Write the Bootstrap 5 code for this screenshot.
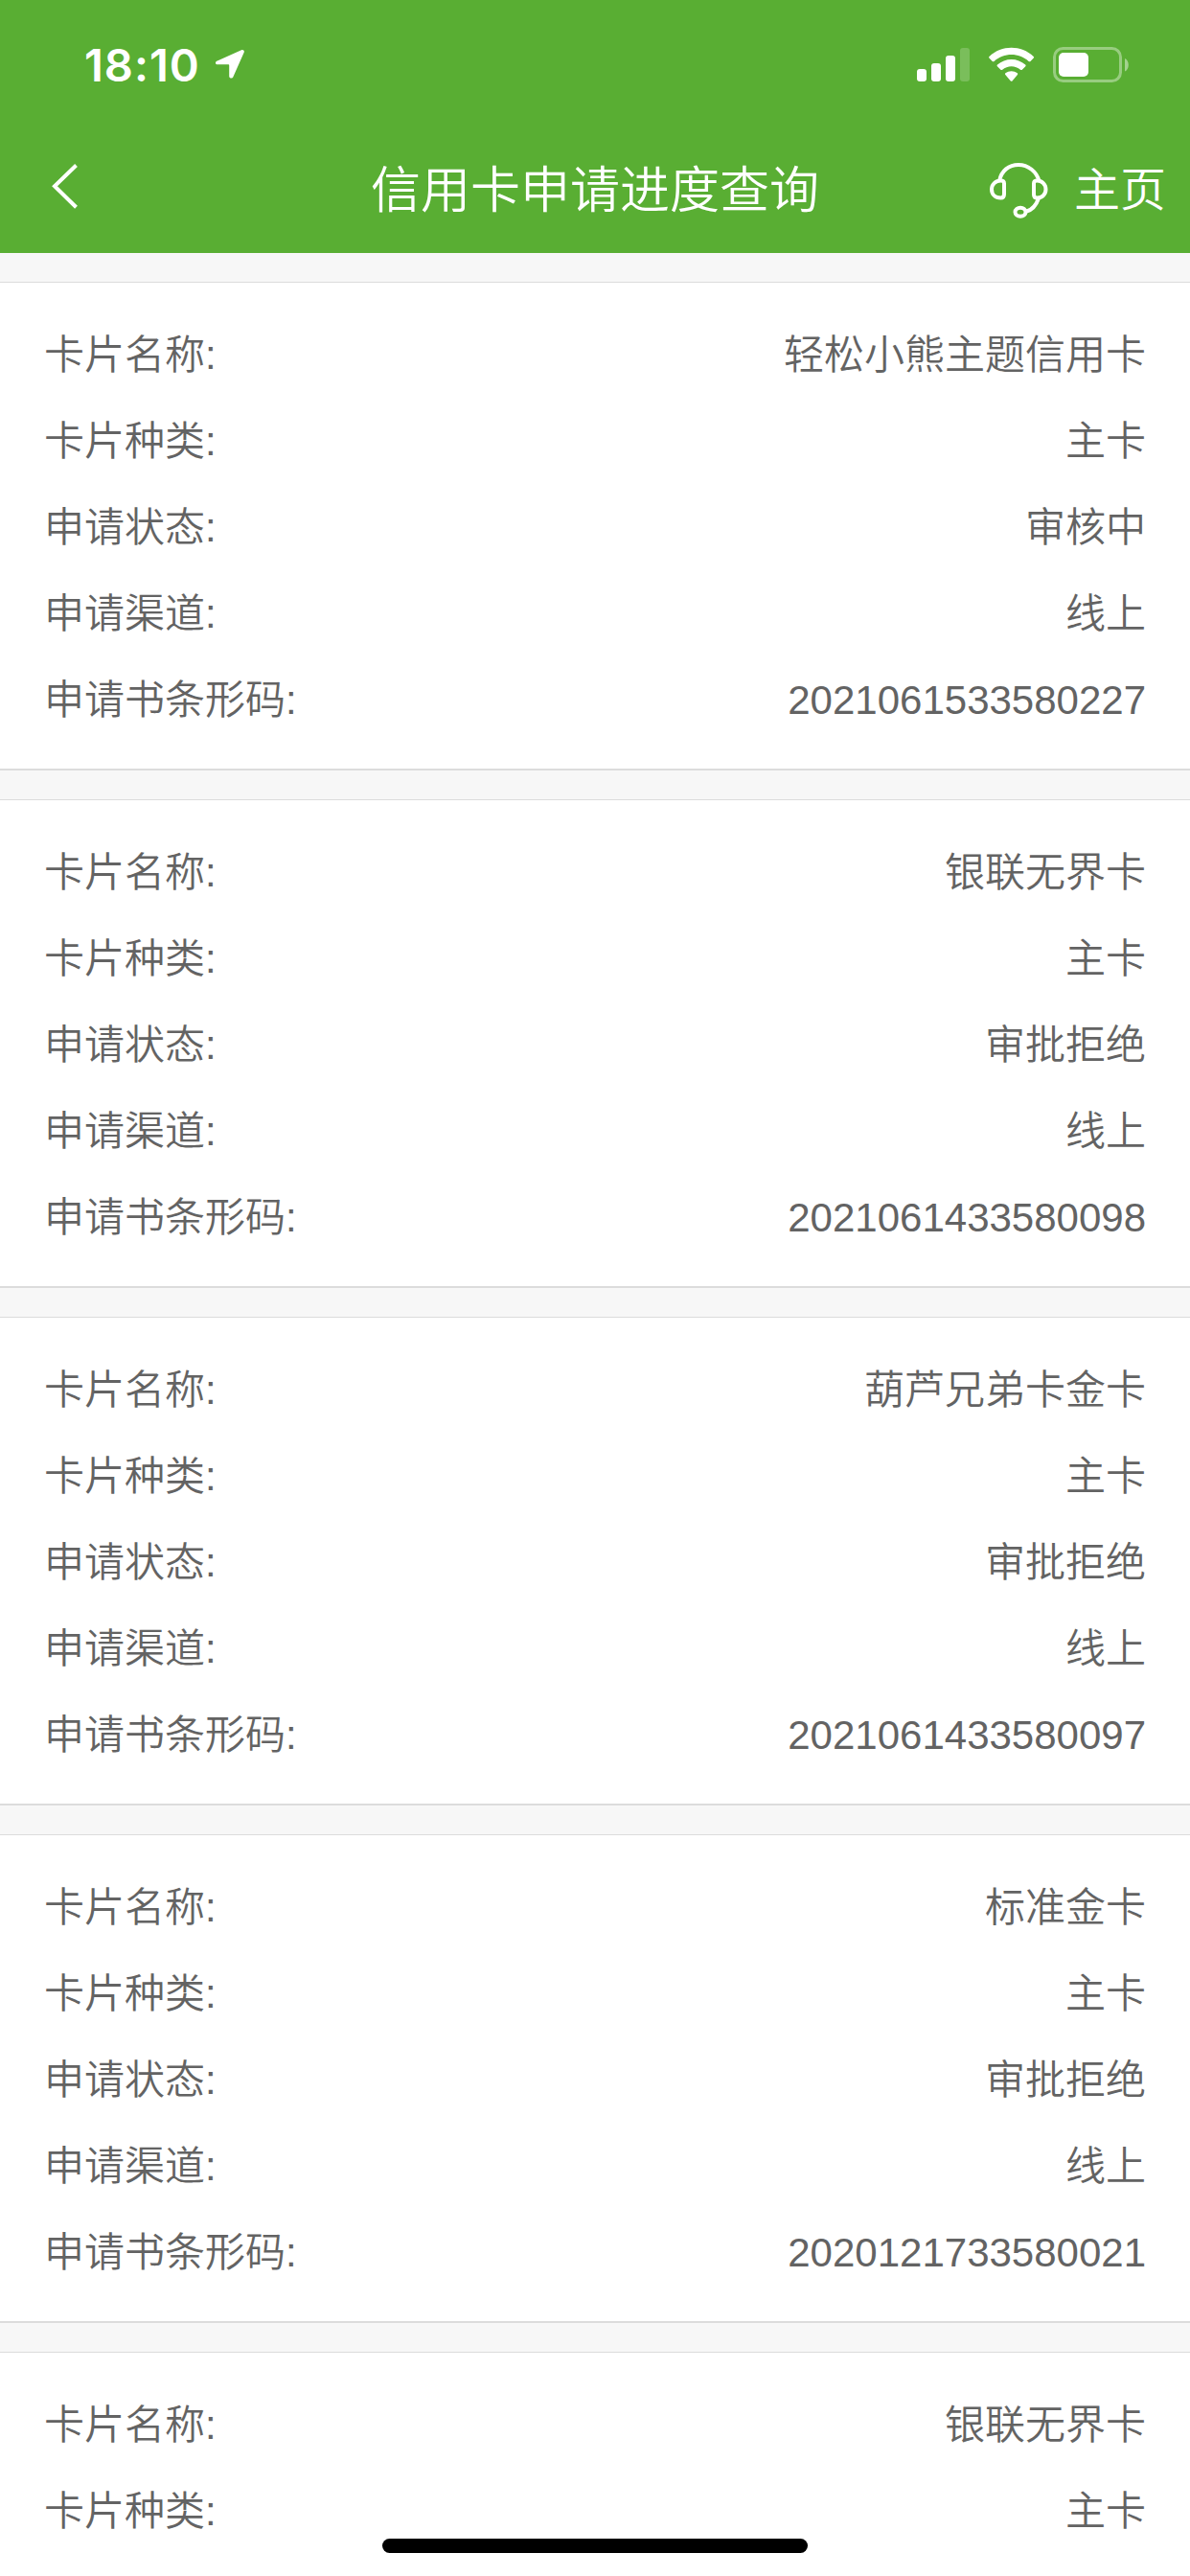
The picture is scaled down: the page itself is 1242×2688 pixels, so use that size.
<!DOCTYPE html>
<html lang="zh-CN">
<head>
<meta charset="utf-8">
<meta name="viewport" content="width=device-width, initial-scale=1">
<title>信用卡申请进度查询</title>
<link href="https://cdn.jsdelivr.net/npm/bootstrap@5.3.0/dist/css/bootstrap.min.css" rel="stylesheet">
<style>
  body { font-family: "Liberation Sans", "Noto Sans CJK SC", sans-serif; background: #f7f7f7; height: 2688px; }
  .app-top { background: #59ae33; }
  .status-bar { height: 132px; padding: 4px 62px 0 88px; }
  .clock { font: 600 47px/1 Inter, sans-serif; letter-spacing: 1px; }
  .clock-group { padding-bottom: 2px; }
  .title-bar { height: 132px; display: grid; grid-template-columns: 1fr auto 1fr; padding: 2px 25px 0; }
  .title-bar h1 { font-size: 52px; font-weight: 350; line-height: 60px; }
  .back { margin: 0 0 8px 27px; }
  .actions { gap: 26px; }
  .home-link { font-size: 48px; font-weight: 350; line-height: 60px; }
  .record { height: 510px; margin-top: 30px; padding: 31px 46px 0; border-top: 1px solid #dcdcdc; border-bottom: 2px solid #dcdcdc; color: #636363; font-size: 42px; line-height: 90px; }
  .record:last-child { height: 234px; border-bottom: 0; }
  .record dt, .record dd { font-weight: 350; margin: 0; height: 90px; }
  .home-indicator { width: 444px; height: 15px; bottom: 24px; }
  svg { display: block; flex: none; }
</style>
</head>
<body class="overflow-hidden position-relative">
<header class="app-top text-white">
  <div class="status-bar d-flex justify-content-between align-items-center">
    <div class="clock-group d-flex align-items-center gap-3">
      <span class="clock">18:10</span>
      <svg width="32" height="34" viewBox="1 0 34 34" fill="#fff"><path d="M3 13.200 29.600 1.200c2-.8 3.700.7 2.900 2.800L20.500 31c-1.100 2.500-4.400 1.700-4.400-.8V18.500c0-.9-.4-1.200-1.200-1.200H3.200c-2.700 0-3.200-3-.2-4.100Z"/></svg>
    </div>
    <svg width="223" height="38" viewBox="957 49 223 38" fill="#fff">
      <rect x="957" y="72" width="10" height="13" rx="3"/>
      <rect x="972" y="66" width="10" height="19" rx="3"/>
      <rect x="987" y="58" width="10" height="27" rx="3"/>
      <rect x="1002" y="50" width="10" height="35" rx="3" opacity=".2"/>
      <path d="M1032.500 58.900c12.800-12.200 33.400-12.200 46.200 0 .6.600.6 1.100.1 1.600l-3.300 3.400c-.6.600-1.200.6-1.900 0-10-9.200-26-9.200-36 0-.7.600-1.300.6-1.900 0l-3.300-3.400c-.5-.5-.5-1 .1-1.600Z"/>
      <path d="M1041 67.600c8.200-7.500 21-7.500 29.200 0 .6.600.6 1.100.1 1.600l-3.500 3.500c-.6.600-1.200.5-1.800 0-5.300-4.700-13.500-4.700-18.800 0-.6.500-1.200.6-1.800 0l-3.500-3.500c-.5-.5-.5-1 .1-1.600Z"/>
      <path d="M1049.400 76.300c3.600-2.800 8.800-2.800 12.400 0 .6.500.6 1 .1 1.600l-5.400 6.500c-.5.600-1.200.6-1.700 0l-5.500-6.500c-.5-.6-.5-1.100.1-1.600Z"/>
      <rect x="1100.500" y="50.500" width="69" height="34" rx="9" fill="none" stroke="#fff" stroke-width="3" opacity=".38"/>
      <rect x="1105" y="55" width="31" height="25" rx="5"/>
      <path d="M1174 61c5 2 5 11.500 0 13.500Z" opacity=".45"/>
    </svg>
  </div>
  <nav class="title-bar align-items-center">
    <svg class="back" width="30" height="50" viewBox="0 0 30 50" fill="none" stroke="#fff" stroke-width="4"><path d="M27.500 2.500 5 24.300l22.500 21.900"/></svg>
    <h1 class="m-0">信用卡申请进度查询</h1>
    <div class="actions d-flex align-items-center justify-content-end">
      <svg width="64" height="62" viewBox="1031 168 64 62" fill="none" stroke="#fff" stroke-width="4">
        <path d="M1043 189c2-11 10-17 20-17s19 7 21.500 17M1084 207c-2.500 7-7 12-12.500 13.500"/>
        <path d="M1048 191.500v11c0 2.500-1 4-3.500 4-6 0-9.500-4-9.500-9s4-9 9.500-9c2.500 0 3.500.5 3.500 3ZM1079 191.500v11.500c0 2.300 1 3.500 3.500 3.500 5.500 0 9-4 9-9s-4-9-9-9c-2.500 0-3.500.8-3.500 3Z"/>
        <ellipse cx="1065" cy="221.300" rx="5.500" ry="4.500"/>
      </svg>
      <span class="home-link">主页</span>
    </div>
  </nav>
</header>
<main>
  <dl class="record bg-white mb-0">
    <div class="d-flex justify-content-between"><dt>卡片名称:</dt><dd>轻松小熊主题信用卡</dd></div>
    <div class="d-flex justify-content-between"><dt>卡片种类:</dt><dd>主卡</dd></div>
    <div class="d-flex justify-content-between"><dt>申请状态:</dt><dd>审核中</dd></div>
    <div class="d-flex justify-content-between"><dt>申请渠道:</dt><dd>线上</dd></div>
    <div class="d-flex justify-content-between"><dt>申请书条形码:</dt><dd>2021061533580227</dd></div>
  </dl>
  <dl class="record bg-white mb-0">
    <div class="d-flex justify-content-between"><dt>卡片名称:</dt><dd>银联无界卡</dd></div>
    <div class="d-flex justify-content-between"><dt>卡片种类:</dt><dd>主卡</dd></div>
    <div class="d-flex justify-content-between"><dt>申请状态:</dt><dd>审批拒绝</dd></div>
    <div class="d-flex justify-content-between"><dt>申请渠道:</dt><dd>线上</dd></div>
    <div class="d-flex justify-content-between"><dt>申请书条形码:</dt><dd>2021061433580098</dd></div>
  </dl>
  <dl class="record bg-white mb-0">
    <div class="d-flex justify-content-between"><dt>卡片名称:</dt><dd>葫芦兄弟卡金卡</dd></div>
    <div class="d-flex justify-content-between"><dt>卡片种类:</dt><dd>主卡</dd></div>
    <div class="d-flex justify-content-between"><dt>申请状态:</dt><dd>审批拒绝</dd></div>
    <div class="d-flex justify-content-between"><dt>申请渠道:</dt><dd>线上</dd></div>
    <div class="d-flex justify-content-between"><dt>申请书条形码:</dt><dd>2021061433580097</dd></div>
  </dl>
  <dl class="record bg-white mb-0">
    <div class="d-flex justify-content-between"><dt>卡片名称:</dt><dd>标准金卡</dd></div>
    <div class="d-flex justify-content-between"><dt>卡片种类:</dt><dd>主卡</dd></div>
    <div class="d-flex justify-content-between"><dt>申请状态:</dt><dd>审批拒绝</dd></div>
    <div class="d-flex justify-content-between"><dt>申请渠道:</dt><dd>线上</dd></div>
    <div class="d-flex justify-content-between"><dt>申请书条形码:</dt><dd>2020121733580021</dd></div>
  </dl>
  <dl class="record bg-white mb-0">
    <div class="d-flex justify-content-between"><dt>卡片名称:</dt><dd>银联无界卡</dd></div>
    <div class="d-flex justify-content-between"><dt>卡片种类:</dt><dd>主卡</dd></div>
  </dl>
</main>
<div class="home-indicator position-absolute start-50 translate-middle-x rounded-pill bg-black"></div>
<script src="https://cdn.jsdelivr.net/npm/bootstrap@5.3.0/dist/js/bootstrap.bundle.min.js"></script>
</body>
</html>
